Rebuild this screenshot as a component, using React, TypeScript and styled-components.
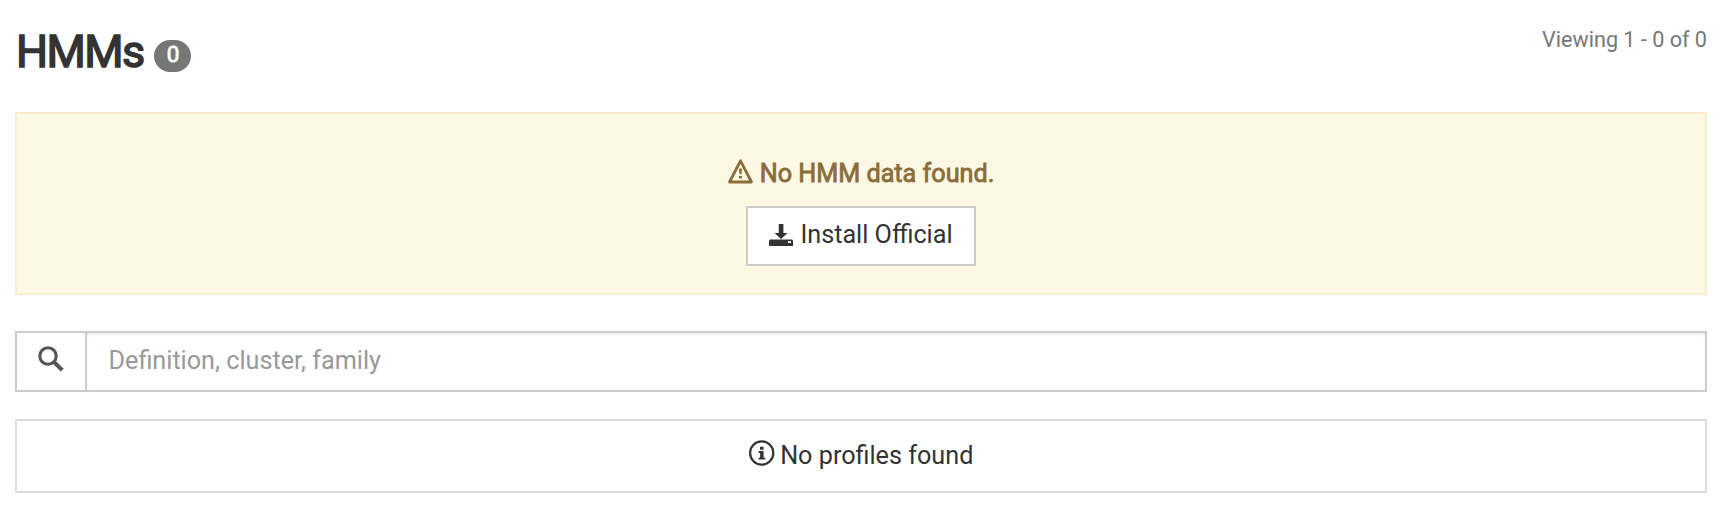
import React from "react";
import styled, { createGlobalStyle } from "styled-components";

const GlobalStyle = createGlobalStyle`
  * { box-sizing: border-box; }
  body {
    margin: 0;
    background: #fff;
    color: #333;
    font-family: Roboto, "Liberation Sans", sans-serif;
    font-size: 25.2px;
    line-height: 36px;
  }
`;

const Page = styled.main`
  padding: 22px 16px 0 15px;
`;

const Header = styled.header`
  display: flex;
  justify-content: space-between;
  align-items: flex-start;
  height: 90px;
`;

const Title = styled.h1`
  display: flex;
  align-items: flex-start;
  margin: 0;
  padding: 1px 0 0 1px;
  font-size: 45px;
  line-height: 58px;
  font-weight: 400;
  letter-spacing: -1.6px;
  -webkit-text-stroke: 1.5px #333;
`;

const Badge = styled.span`
  display: flex;
  align-items: center;
  justify-content: center;
  width: 37px;
  height: 32px;
  margin: 17px 0 0 10px;
  padding: 0 0 3px 2px;
  border-radius: 18px;
  background: #777;
  color: #fff;
  font-size: 22.5px;
  line-height: 27px;
  letter-spacing: 0;
  -webkit-text-stroke: 0.8px #fff;
`;

const Count = styled.span`
  color: #777;
  font-size: 21.6px;
  line-height: 36px;
`;

const Alert = styled.section`
  display: flex;
  flex-direction: column;
  align-items: center;
  height: 183px;
  padding-top: 42px;
  border: 2px solid #faebcc;
  background: #fcf8e3;
  color: #8a6d3b;
`;

const Message = styled.div<{ $strong?: boolean }>`
  display: flex;
  align-items: center;
  gap: ${(p) => (p.$strong ? 6 : 5.5)}px;
  height: 36px;
  -webkit-text-stroke: ${(p) => (p.$strong ? "0.8px currentColor" : "0")};
`;

const Icon = styled.svg<{ $lift?: number }>`
  display: block;
  flex: none;
  margin-bottom: ${(p) => p.$lift ?? 0}px;
`;

const Button = styled.button`
  display: flex;
  align-items: center;
  justify-content: center;
  gap: 7px;
  width: 230px;
  height: 60px;
  margin-top: 14px;
  padding: 0 0 2px;
  border: 2px solid #ccc;
  background: #fff;
  color: #333;
  font: inherit;
`;

const SearchGroup = styled.div`
  display: flex;
  height: 61px;
  margin-top: 36px;
  border: 2px solid #ccc;
`;

const Addon = styled.span`
  display: flex;
  align-items: center;
  justify-content: center;
  width: 70px;
  border-right: 2px solid #ccc;
  color: #555;
`;

const SearchInput = styled.input`
  flex: 1;
  min-width: 0;
  padding: 0 21.5px 1px;
  border: 0;
  outline: 0;
  background: #fff;
  box-shadow: inset 0 2px 2px rgba(0, 0, 0, 0.075);
  color: #555;
  font: inherit;
  &::placeholder { color: #999; opacity: 1; }
`;

const Panel = styled.section`
  display: flex;
  justify-content: center;
  height: 74px;
  margin-top: 27px;
  padding-top: 17px;
  border: 2px solid #ddd;
`;

const WarningIcon = () => (
  <Icon width="26" height="26" viewBox="0 0 26 26" $lift={6}>
    <path d="M12.5 2.8 23.5 24h-22Z" fill="none" stroke="currentColor" strokeWidth="2.8" strokeLinejoin="round" />
    <path d="M11 10.5h3l-.4 5.5h-2.2ZM11 17.9h3v2.5h-3Z" fill="currentColor" stroke="none" />
  </Icon>
);

const DownloadIcon = () => (
  <Icon width="24" height="22" viewBox="0 0 24 22" fill="currentColor">
    <path d="M9.8 0h4.6v9h4.2L12 15 5.6 9h4.2Z" />
    <path fillRule="evenodd" d="M1 15.6H23l1 .8V22H0v-5.6ZM19 17.2v1.7h3v-1.7Z" />
  </Icon>
);

const SearchIcon = () => (
  <Icon width="26" height="26" viewBox="0 0 26 26" fill="none" stroke="currentColor" $lift={6}>
    <circle cx="10" cy="10" r="8.2" strokeWidth="3.1" />
    <path d="m16 16 8.2 8.2" strokeWidth="4" />
  </Icon>
);

const InfoIcon = () => (
  <Icon width="26" height="26" viewBox="0 0 26 26" $lift={7}>
    <circle cx="12.7" cy="13" r="11.6" fill="none" stroke="currentColor" strokeWidth="2.2" />
    <path d="M11 6.7h3.6v3H11ZM9.6 11.1h5v6.6h1.7v1.9H9.6v-1.9h1.5V13H9.6Z" fill="currentColor" />
  </Icon>
);

export default function App() {
  return (
    <>
      <GlobalStyle />
      <Page>
        <Header>
          <Title>
            HMMs
            <Badge>0</Badge>
          </Title>
          <Count>Viewing 1 - 0 of 0</Count>
        </Header>
        <Alert>
          <Message $strong>
            <WarningIcon />
            <span>No HMM data found.</span>
          </Message>
          <Button type="button">
            <DownloadIcon />
            <span>Install Official</span>
          </Button>
        </Alert>
        <SearchGroup>
          <Addon>
            <SearchIcon />
          </Addon>
          <SearchInput type="text" placeholder="Definition, cluster, family" />
        </SearchGroup>
        <Panel>
          <Message>
            <InfoIcon />
            <span>No profiles found</span>
          </Message>
        </Panel>
      </Page>
    </>
  );
}
